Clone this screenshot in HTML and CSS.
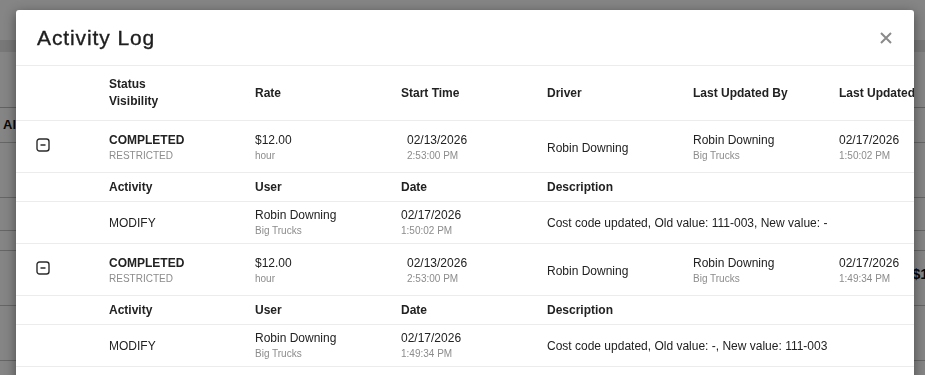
FILE: index.html
```html
<!DOCTYPE html>
<html lang="en">
<head>
  <meta charset="UTF-8">
  <meta name="viewport" content="width=device-width, initial-scale=1.0">
  <title>Activity Log</title>
  <link rel="stylesheet" href="styles.css">
</head>
<body>
  <!-- page behind the dialog -->
  <div class="page">
    <div class="page-bar"></div>
    <div class="page-table">
      <div class="page-row page-head">Al</div>
      <div class="page-row tall"></div>
      <div class="page-row short"></div>
      <div class="page-row thin"></div>
      <div class="page-row tall amount">$1</div>
      <div class="page-row tall"></div>
    </div>
  </div>

  <div class="backdrop"></div>

  <div class="modal">
    <div class="modal-header">
      <h2>Activity Log</h2>
      <button class="close" aria-label="Close">
        <svg width="12" height="12" viewBox="0 0 12 12">
          <path d="M1 1 L11 11 M11 1 L1 11" stroke="#8a8a8a" stroke-width="2" fill="none"/>
        </svg>
      </button>
    </div>

    <div class="modal-body">
      <div class="log">
        <div class="row head">
          <div></div>
          <div>Status<br>Visibility</div>
          <div>Rate</div>
          <div>Start Time</div>
          <div>Driver</div>
          <div>Last Updated By</div>
          <div>Last Updated</div>
        </div>

        <div class="row entry">
          <div class="toggle">
            <svg width="14" height="14" viewBox="0 0 14 14">
              <rect x="1" y="1" width="12" height="12" rx="2.5" stroke="#2b2b2b" stroke-width="1.4" fill="none"/>
              <path d="M4.5 7 H9.5" stroke="#2b2b2b" stroke-width="1.5"/>
            </svg>
          </div>
          <div><div class="main bold">COMPLETED</div><div class="sub">RESTRICTED</div></div>
          <div><div class="main">$12.00</div><div class="sub">hour</div></div>
          <div class="shift"><div class="main">02/13/2026</div><div class="sub">2:53:00 PM</div></div>
          <div>Robin Downing</div>
          <div><div class="main">Robin Downing</div><div class="sub">Big Trucks</div></div>
          <div><div class="main">02/17/2026</div><div class="sub">1:50:02 PM</div></div>
        </div>
        <div class="row sub-head">
          <div></div>
          <div>Activity</div>
          <div>User</div>
          <div>Date</div>
          <div class="wide">Description</div>
        </div>
        <div class="row sub-entry">
          <div></div>
          <div>MODIFY</div>
          <div><div class="main">Robin Downing</div><div class="sub">Big Trucks</div></div>
          <div><div class="main">02/17/2026</div><div class="sub">1:50:02 PM</div></div>
          <div class="wide">Cost code updated, Old value: 111-003, New value: -</div>
        </div>

        <div class="row entry">
          <div class="toggle">
            <svg width="14" height="14" viewBox="0 0 14 14">
              <rect x="1" y="1" width="12" height="12" rx="2.5" stroke="#2b2b2b" stroke-width="1.4" fill="none"/>
              <path d="M4.5 7 H9.5" stroke="#2b2b2b" stroke-width="1.5"/>
            </svg>
          </div>
          <div><div class="main bold">COMPLETED</div><div class="sub">RESTRICTED</div></div>
          <div><div class="main">$12.00</div><div class="sub">hour</div></div>
          <div class="shift"><div class="main">02/13/2026</div><div class="sub">2:53:00 PM</div></div>
          <div>Robin Downing</div>
          <div><div class="main">Robin Downing</div><div class="sub">Big Trucks</div></div>
          <div><div class="main">02/17/2026</div><div class="sub">1:49:34 PM</div></div>
        </div>
        <div class="row sub-head">
          <div></div>
          <div>Activity</div>
          <div>User</div>
          <div>Date</div>
          <div class="wide">Description</div>
        </div>
        <div class="row sub-entry">
          <div></div>
          <div>MODIFY</div>
          <div><div class="main">Robin Downing</div><div class="sub">Big Trucks</div></div>
          <div><div class="main">02/17/2026</div><div class="sub">1:49:34 PM</div></div>
          <div class="wide">Cost code updated, Old value: -, New value: 111-003</div>
        </div>
      </div>
    </div>
  </div>
</body>
</html>
```

FILE: styles.css
```css
body {
  font-family: "Liberation Sans", Arial, sans-serif;
  margin: 0;
  padding: 0;
  background-color: #fff;
  overflow: hidden;
}

/* page behind the dialog */
.page {
  height: 375px;
}

.page-bar {
  margin-top: 40px;
  height: 12px;
  background-color: #e6e6e6;
}

.page-table {
  margin-top: 55px;
  border-top: 1px solid #bdbdbd;
}

.page-row {
  border-bottom: 1px solid #c4c4c4;
  box-sizing: border-box;
  font-weight: bold;
  font-size: 13px;
  color: #111;
}

.page-head {
  height: 35px;
  line-height: 34px;
  padding-left: 3px;
}

.page-row.tall {
  height: 55px;
}

.page-row.short {
  height: 33px;
}

.page-row.thin {
  height: 20px;
}

.page-row.amount {
  padding-left: 912px;
  line-height: 46px;
  font-size: 15px;
  white-space: nowrap;
}

.backdrop {
  position: fixed;
  inset: 0;
  background: rgba(0, 0, 0, 0.48);
}

/* dialog */
.modal {
  position: absolute;
  top: 10px;
  left: 16px;
  width: 898px;
  height: 380px;
  background: #fff;
  border-radius: 3px;
  box-shadow: 0 3px 12px rgba(0, 0, 0, 0.45);
  overflow: hidden;
}

.modal-header {
  display: flex;
  justify-content: space-between;
  align-items: center;
  height: 56px;
  box-sizing: border-box;
  padding: 0 21px 0 21px;
  border-bottom: 1px solid #ececec;
}

.modal-header h2 {
  margin: 0;
  font-size: 21px;
  font-weight: normal;
  letter-spacing: 0.9px;
  color: #1e1e1e;
  -webkit-text-stroke: 0.35px #1e1e1e;
}

.close {
  border: none;
  background: none;
  padding: 0;
  margin-right: 1px;
  display: flex;
  cursor: pointer;
}

.modal-body {
  overflow: hidden;
}

.log {
  width: 975px;
  font-size: 12px;
  color: #222;
}

.row {
  display: grid;
  grid-template-columns: 93px repeat(6, 146px);
  align-items: center;
  box-sizing: border-box;
  border-bottom: 1px solid #ececec;
}

.row.head {
  height: 55px;
  font-weight: bold;
  line-height: 17px;
}

.row.entry {
  height: 52px;
  padding-top: 2px;
}

.row.sub-head {
  height: 29px;
  font-weight: bold;
}

.row.sub-entry {
  height: 42px;
}

.wide {
  grid-column: span 3;
}

.toggle {
  display: flex;
  padding-left: 20px;
  margin-top: -6px;
}

.shift {
  padding-left: 6px;
}

.main {
  line-height: 16px;
}

.bold {
  font-weight: bold;
}

.sub {
  font-size: 10px;
  line-height: 16px;
  color: #8c8c8c;
}
```
